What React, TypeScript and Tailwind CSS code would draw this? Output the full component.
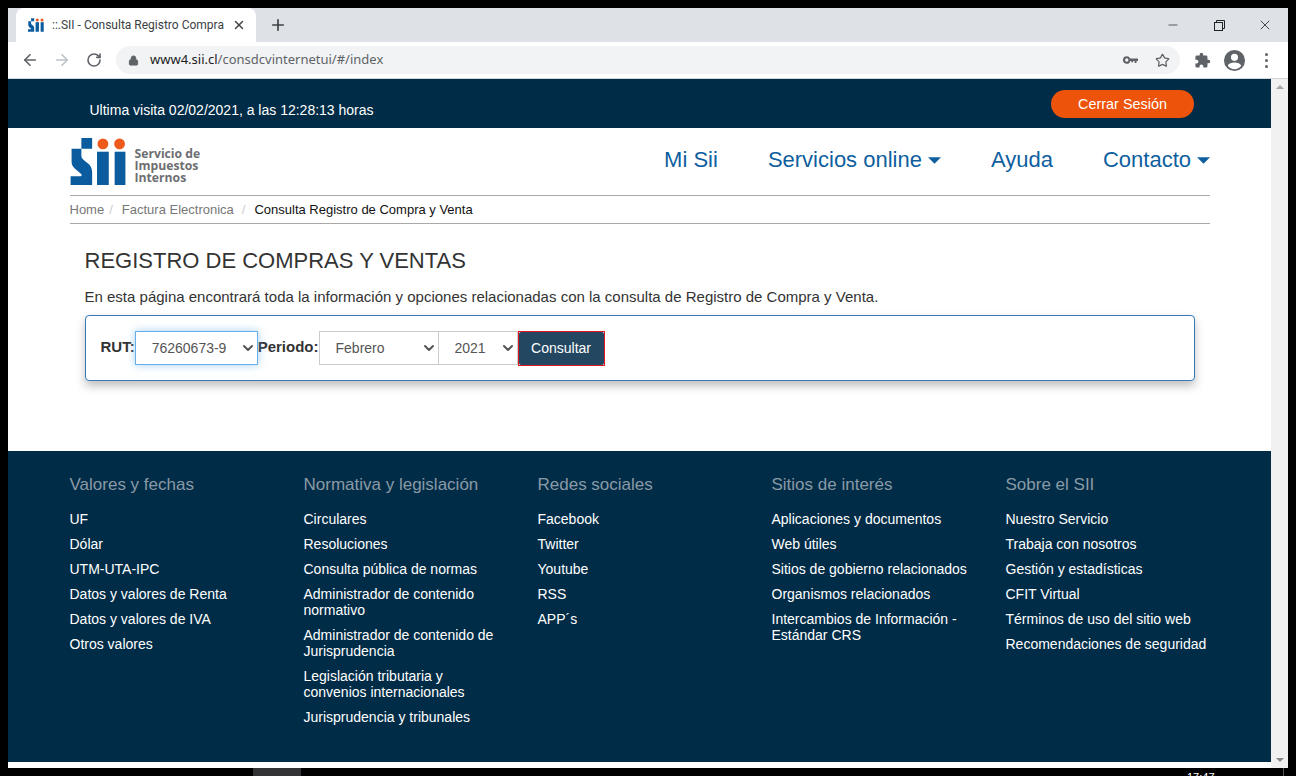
import { ArrowLeft, ArrowRight, RotateCw, Plus, X, Lock, Star, Minus, ChevronDown } from "lucide-react";

const footerColumns = [
  {
    title: "Valores y fechas",
    links: ["UF", "Dólar", "UTM-UTA-IPC", "Datos y valores de Renta", "Datos y valores de IVA", "Otros valores"],
  },
  {
    title: "Normativa y legislación",
    links: [
      "Circulares",
      "Resoluciones",
      "Consulta pública de normas",
      "Administrador de contenido normativo",
      "Administrador de contenido de Jurisprudencia",
      "Legislación tributaria y convenios internacionales",
      "Jurisprudencia y tribunales",
    ],
  },
  {
    title: "Redes sociales",
    links: ["Facebook", "Twitter", "Youtube", "RSS", "APP´s"],
  },
  {
    title: "Sitios de interés",
    links: [
      "Aplicaciones y documentos",
      "Web útiles",
      "Sitios de gobierno relacionados",
      "Organismos relacionados",
      "Intercambios de Información - Estándar CRS",
    ],
  },
  {
    title: "Sobre el SII",
    links: [
      "Nuestro Servicio",
      "Trabaja con nosotros",
      "Gestión y estadísticas",
      "CFIT Virtual",
      "Términos de uso del sitio web",
      "Recomendaciones de seguridad",
    ],
  },
];

function SiiMark({ className }: { className: string }) {
  return (
    <svg viewBox="0 0 57 48" className={className}>
      <path fill="#0b5c9e" d="M11 0h11v11H11zM1 11h10v7c0 2 1 3 3 5l5 4c2 2 3 5 3 8v13H0v-9h10c1 0 2-1 1-2l-7-6c-2-2-3-4-3-7z" />
      <rect x="27" y="14" width="12" height="34" fill="#0b5c9e" />
      <rect x="45" y="14" width="11" height="34" fill="#0b5c9e" />
      <circle cx="33" cy="6" r="5.500" fill="#ee5a1c" />
      <circle cx="50" cy="6" r="5.500" fill="#ee5a1c" />
    </svg>
  );
}

function Caret() {
  return (
    <svg viewBox="0 0 12 6" className="ml-[6px] mt-[1px] h-[7px] w-[13px]">
      <path d="M0 0h12L6 6z" fill="#0f5f9f" />
    </svg>
  );
}

function NiceSelect({ value, widthClass, boxClass }: { value: string; widthClass: string; boxClass: string }) {
  return (
    <div className={`relative h-[34px] bg-white ${widthClass} ${boxClass}`}>
      <select defaultValue={value} className="h-full w-full appearance-none bg-transparent pl-[16px] pt-[1px] text-[14px] text-[#555555] outline-none">
        <option>{value}</option>
      </select>
      <ChevronDown className="pointer-events-none absolute right-[1px] top-[8px] h-[16px] w-[16px] text-[#555555]" strokeWidth={3} />
    </div>
  );
}

function BrowserChrome() {
  return (
    <div className="shrink-0" style={{ fontFamily: '"Open Sans", sans-serif' }}>
      <div className="flex h-[34px] items-end bg-[#dee1e6] pl-[8px]">
        <div className="flex h-[34px] w-[240px] items-center rounded-t-[8px] bg-white pl-[12px] pr-[10px]">
          <SiiMark className="h-[14px] w-[16px] shrink-0" />
          <span className="ml-[8px] w-[174px] shrink-0 whitespace-nowrap text-[12px] text-[#3c4043]" style={{ fontFamily: "Roboto, sans-serif" }}>
            ::.SII - Consulta Registro Compra
          </span>
          <X className="ml-auto h-[14px] w-[14px] shrink-0 text-[#444746]" strokeWidth={2.5} />
        </div>
        <Plus className="mb-[8px] ml-[13px] h-[18px] w-[18px] text-[#3c4043]" strokeWidth={2.2} />
        <div className="ml-auto flex h-full items-center text-[#202124]">
          <div className="flex w-[46px] justify-center">
            <Minus className="h-[16px] w-[14px]" strokeWidth={1.2} />
          </div>
          <div className="flex w-[46px] justify-center">
            <svg viewBox="0 0 11 11" className="h-[11px] w-[11px]" fill="none" stroke="#202124">
              <rect x="0.5" y="2.5" width="8" height="8" />
              <path d="M2.5 2.5v-2h8v8h-2" />
            </svg>
          </div>
          <div className="flex w-[46px] justify-center">
            <X className="h-[16px] w-[16px]" strokeWidth={1.2} />
          </div>
        </div>
      </div>
      <div className="flex h-[36px] items-center bg-white pl-[13px] pr-[10px]">
        <ArrowLeft className="h-[18px] w-[18px] text-[#5f6368]" strokeWidth={2.2} />
        <ArrowRight className="ml-[14px] h-[18px] w-[18px] text-[#bdc1c6]" strokeWidth={2.2} />
        <RotateCw className="ml-[15px] h-[16px] w-[16px] text-[#5f6368]" strokeWidth={2.4} />
        <div className="ml-[14px] flex h-[28px] w-[1064px] shrink-0 items-center rounded-full bg-[#f1f3f4] pl-[12px] pr-[10px]">
          <Lock className="h-[11px] w-[11px] text-[#5f6368]" fill="#5f6368" strokeWidth={2} />
          <span className="ml-[11px] text-[13px] text-[#202124]" style={{ fontFamily: '"Noto Sans", sans-serif' }}>
            www4.sii.cl<span className="text-[#5f6368]">/consdcvinternetui/#/index</span>
          </span>
          <svg viewBox="0 0 16 8" className="ml-auto h-[8px] w-[15px]" fill="#5f6368">
            <path fillRule="evenodd" d="M4 0a4 4 0 0 1 3.7 2.5H16V5h-1.6v2.3h-2V5h-1.6v1.5h-2V5h-1A4 4 0 1 1 4 0zm0 2.2a1.8 1.8 0 1 0 0 3.6 1.8 1.8 0 0 0 0-3.6z" />
          </svg>
          <Star className="ml-[17px] h-[15px] w-[15px] text-[#5f6368]" strokeWidth={2} />
        </div>
        <svg viewBox="0 0 24 24" className="ml-[14px] h-[17px] w-[17px] shrink-0" fill="#5f6368">
          <path d="M20.5 11H19V7a2 2 0 0 0-2-2h-4V3.5a2.5 2.5 0 0 0-5 0V5H4a2 2 0 0 0-2 2v3.800h1.500a2.700 2.700 0 0 1 0 5.400H2V20a2 2 0 0 0 2 2h3.800v-1.500a2.700 2.700 0 0 1 5.400 0V22H17a2 2 0 0 0 2-2v-4h1.500a2.500 2.500 0 0 0 0-5z" />
        </svg>
        <svg viewBox="0 0 24 24" className="ml-[12px] h-[23px] w-[23px] shrink-0" fill="#5f6368">
          <path d="M12 1a11 11 0 1 0 0 22 11 11 0 0 0 0-22zm0 4a3.700 3.700 0 1 1 0 7.400A3.700 3.700 0 0 1 12 5zm0 16a8.800 8.800 0 0 1-7-3.500c.7-2.200 4.300-3.400 7-3.400s6.300 1.200 7 3.400a8.800 8.800 0 0 1-7 3.500z" />
        </svg>
        <div className="ml-[19px] flex flex-col gap-[3px]">
          <span className="h-[3px] w-[3px] rounded-full bg-[#5f6368]" />
          <span className="h-[3px] w-[3px] rounded-full bg-[#5f6368]" />
          <span className="h-[3px] w-[3px] rounded-full bg-[#5f6368]" />
        </div>
      </div>
      <div className="h-px bg-[#d5d7da]" />
    </div>
  );
}

function PageHeader() {
  return (
    <>
      <div className="flex h-[49px] items-start justify-between bg-[#002c47] pl-[81.500px] pr-[77px]">
        <p className="mt-[21px] text-[14px] leading-[20px] text-white">Ultima visita 02/02/2021, a las 12:28:13 horas</p>
        <button className="mt-[11px] h-[28px] w-[143px] rounded-full bg-[#ee530b] pt-[2px] text-[14.400px] text-white">Cerrar Sesión</button>
      </div>
      <div className="pl-[61.500px] pr-[61px]">
        <div className="flex h-[68px] items-start border-b border-[#a9a9a9]">
          <SiiMark className="mt-[10px] h-[47px] w-[57px] shrink-0" />
          <div
            className="ml-[8px] mt-[20px] text-[12.200px] font-bold leading-[12px] text-[#6d6e71]"
            style={{ fontFamily: '"Open Sans", sans-serif' }}
          >
            Servicio de
            <br />
            Impuestos
            <br />
            Internos
          </div>
          <nav className="ml-auto mt-[18px] flex items-center gap-[50px] text-[22px] leading-[28px] text-[#0f5f9f]">
            <a>Mi Sii</a>
            <a className="flex items-center">
              Servicios online
              <Caret />
            </a>
            <a>Ayuda</a>
            <a className="flex items-center">
              Contacto
              <Caret />
            </a>
          </nav>
        </div>
        <div className="flex h-[28px] items-center border-b border-[#a9a9a9] text-[13px] text-[#777777]">
          <span>Home</span>
          <span className="ml-[5px] text-[#cccccc]">/</span>
          <span className="ml-[9px]">Factura Electronica</span>
          <span className="ml-[8px] text-[#cccccc]">/</span>
          <span className="ml-[9px] text-[#111111]">Consulta Registro de Compra y Venta</span>
        </div>
      </div>
    </>
  );
}

function SearchForm() {
  return (
    <div className="pl-[76.500px] pr-[77px] pt-[24px]">
      <h1 className="text-[22px] leading-[26px] text-[#333333]">REGISTRO DE COMPRAS Y VENTAS</h1>
      <p className="mt-[13px] text-[15px] leading-[20px] text-[#333333]">
        En esta página encontrará toda la información y opciones relacionadas con la consulta de Registro de Compra y Venta.
      </p>
      <div className="mt-[8px] flex h-[66px] w-[1110px] items-start rounded-[4px] border border-[#337ab7] bg-white pl-[15px] pt-[15px] shadow-[0_5px_10px_rgba(0,0,0,0.25)]">
        <b className="mt-[6px] text-[15px] leading-[20px] text-[#333333]">RUT:</b>
        <NiceSelect value="76260673-9" widthClass="w-[123px]" boxClass="border border-[#66afe9] shadow-[0_0_8px_rgba(102,175,233,0.6)]" />
        <b className="mt-[6px] text-[15px] leading-[20px] text-[#333333]">Periodo:</b>
        <div className="flex">
          <NiceSelect value="Febrero" widthClass="w-[120px]" boxClass="border border-[#cccccc]" />
          <NiceSelect value="2021" widthClass="w-[79px]" boxClass="border border-l-0 border-[#cccccc]" />
        </div>
        <button className="h-[35px] w-[87px] border border-[#e5161d] bg-white text-[14px] text-white">
          <span className="flex h-full items-center justify-center rounded-[2px] bg-[#244761]">Consultar</span>
        </button>
      </div>
    </div>
  );
}

function SiteFooter() {
  return (
    <footer className="grid h-[311px] grid-cols-[234px_234px_234px_234px_234px] bg-[#002c47] pl-[61.500px] pt-[24px]">
      {footerColumns.map((col) => (
        <div key={col.title} className="pr-[30px]">
          <h4 className="whitespace-nowrap text-[17px] leading-[20px] text-[#8a9aa6]">{col.title}</h4>
          <ul className="mt-[16px] flex flex-col gap-[9px]">
            {col.links.map((link) => (
              <li key={link} className="text-[14px] leading-[16px] text-white">
                {link}
              </li>
            ))}
          </ul>
        </div>
      ))}
    </footer>
  );
}

function Scrollbar() {
  return (
    <div className="flex w-[17px] shrink-0 flex-col items-center justify-between bg-[#f1f1f1] py-[6px]">
      <div className="h-0 w-0 border-x-[4px] border-b-[4px] border-x-transparent border-b-[#a3a3a3]" />
      <div className="h-0 w-0 border-x-[4px] border-t-[4px] border-x-transparent border-t-[#8a8a8a]" />
    </div>
  );
}

export default function App() {
  return (
    <div className="flex h-[776px] w-[1296px] flex-col overflow-hidden bg-black pt-[8px]" style={{ fontFamily: '"Liberation Sans", Arial, sans-serif' }}>
      <div className="ml-[8px] flex h-[760px] w-[1280px] shrink-0 flex-col bg-white">
        <BrowserChrome />
        <div className="flex min-h-0 flex-1">
          <main className="flex min-w-0 flex-1 flex-col">
            <PageHeader />
            <div className="flex-1">
              <SearchForm />
            </div>
            <SiteFooter />
            <div className="h-[6px] shrink-0" />
          </main>
          <Scrollbar />
        </div>
      </div>
      <div className="relative flex-1">
        <div className="absolute left-[253px] top-0 h-[8px] w-[48px] bg-[#333336]" />
        <div className="absolute left-[1187px] top-0 h-[8px] overflow-hidden text-[11px] leading-[18px] text-white">17:47</div>
        <div className="absolute left-[1283px] top-0 h-[8px] w-px bg-[#555555]" />
      </div>
    </div>
  );
}
